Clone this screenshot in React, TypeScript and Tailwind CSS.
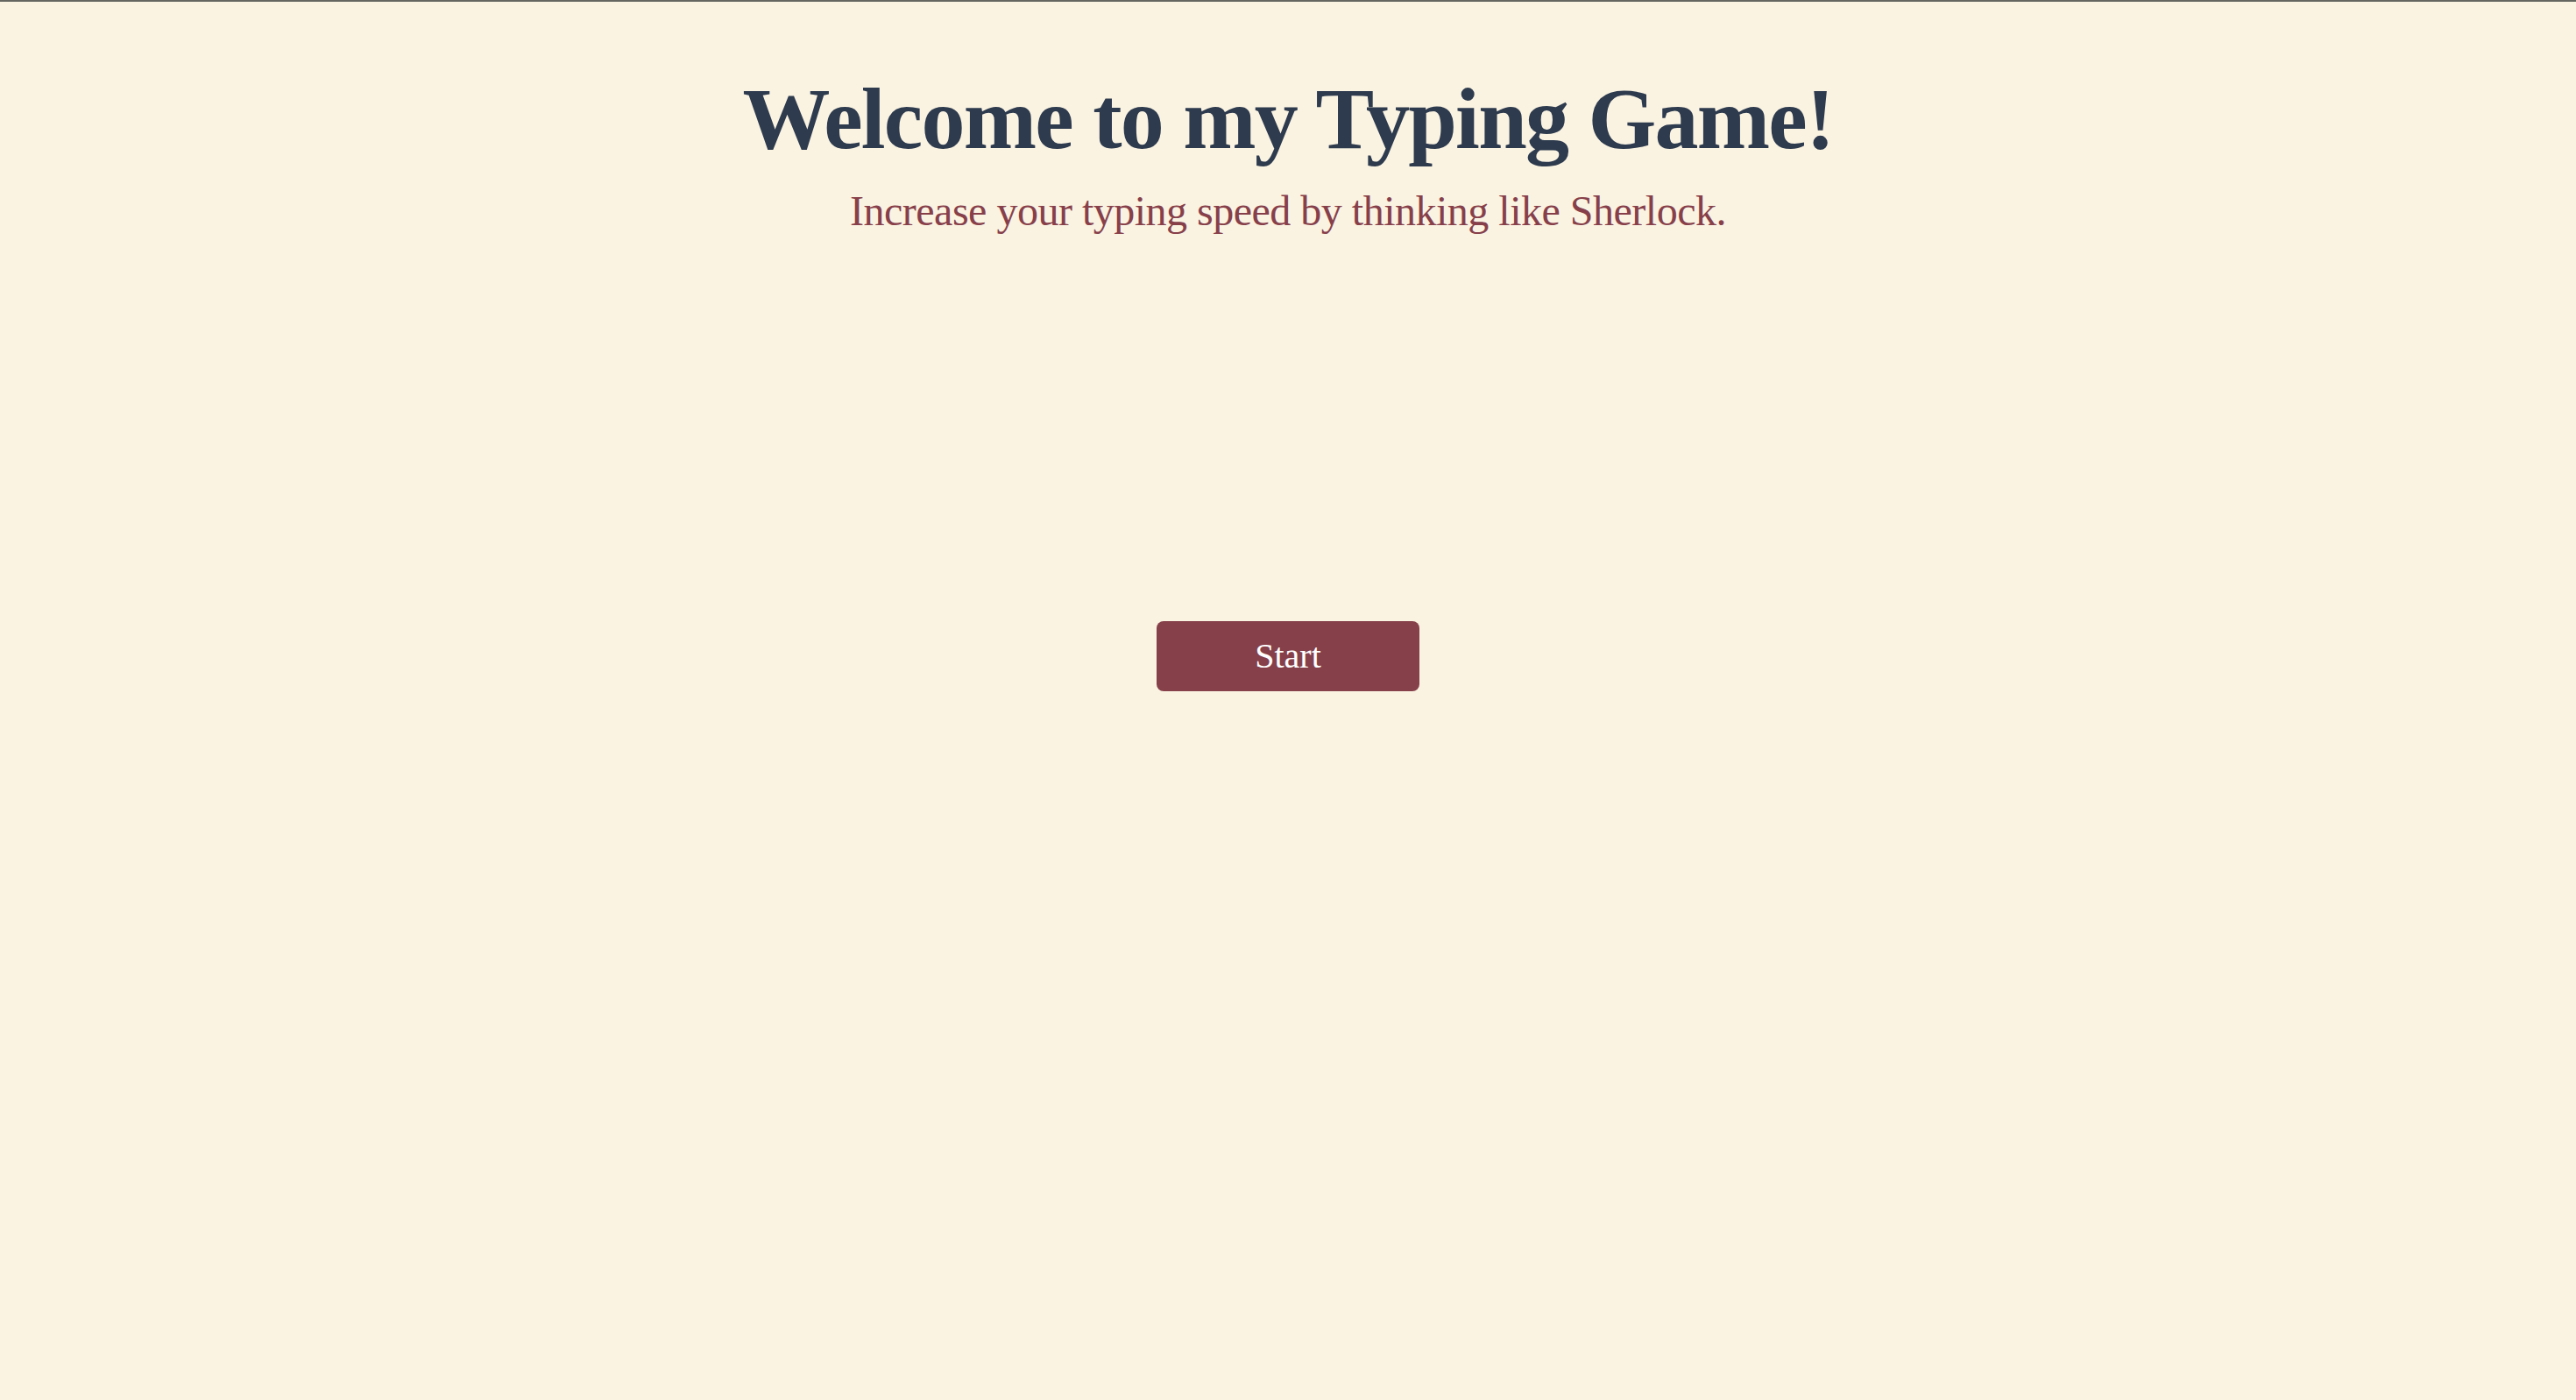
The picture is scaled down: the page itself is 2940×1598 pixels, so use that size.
export default function App() {
  return (
    <div
      className="h-screen overflow-hidden w-full bg-[#faf3e2] border-t-2 border-[#666661] flex flex-col items-center"
      style={{ fontFamily: '"Liberation Serif", "DejaVu Serif", serif' }}
    >
      {/* Header */}
      <h1 className="mt-[84px] text-[100px] leading-none font-bold text-[#2e3b4e] tracking-[-1.75px]">
        Welcome to my Typing Game!
      </h1>
      <p className="mt-[31px] text-[48px] leading-none text-[#87404a] tracking-[-0.5px]">
        Increase your typing speed by thinking like Sherlock.
      </p>

      {/* Start */}
      <button className="mt-[444px] w-[300px] h-[80px] rounded-[8px] bg-[#86404a] text-white text-[40px] leading-none flex items-center justify-center">
        Start
      </button>
    </div>
  );
}
